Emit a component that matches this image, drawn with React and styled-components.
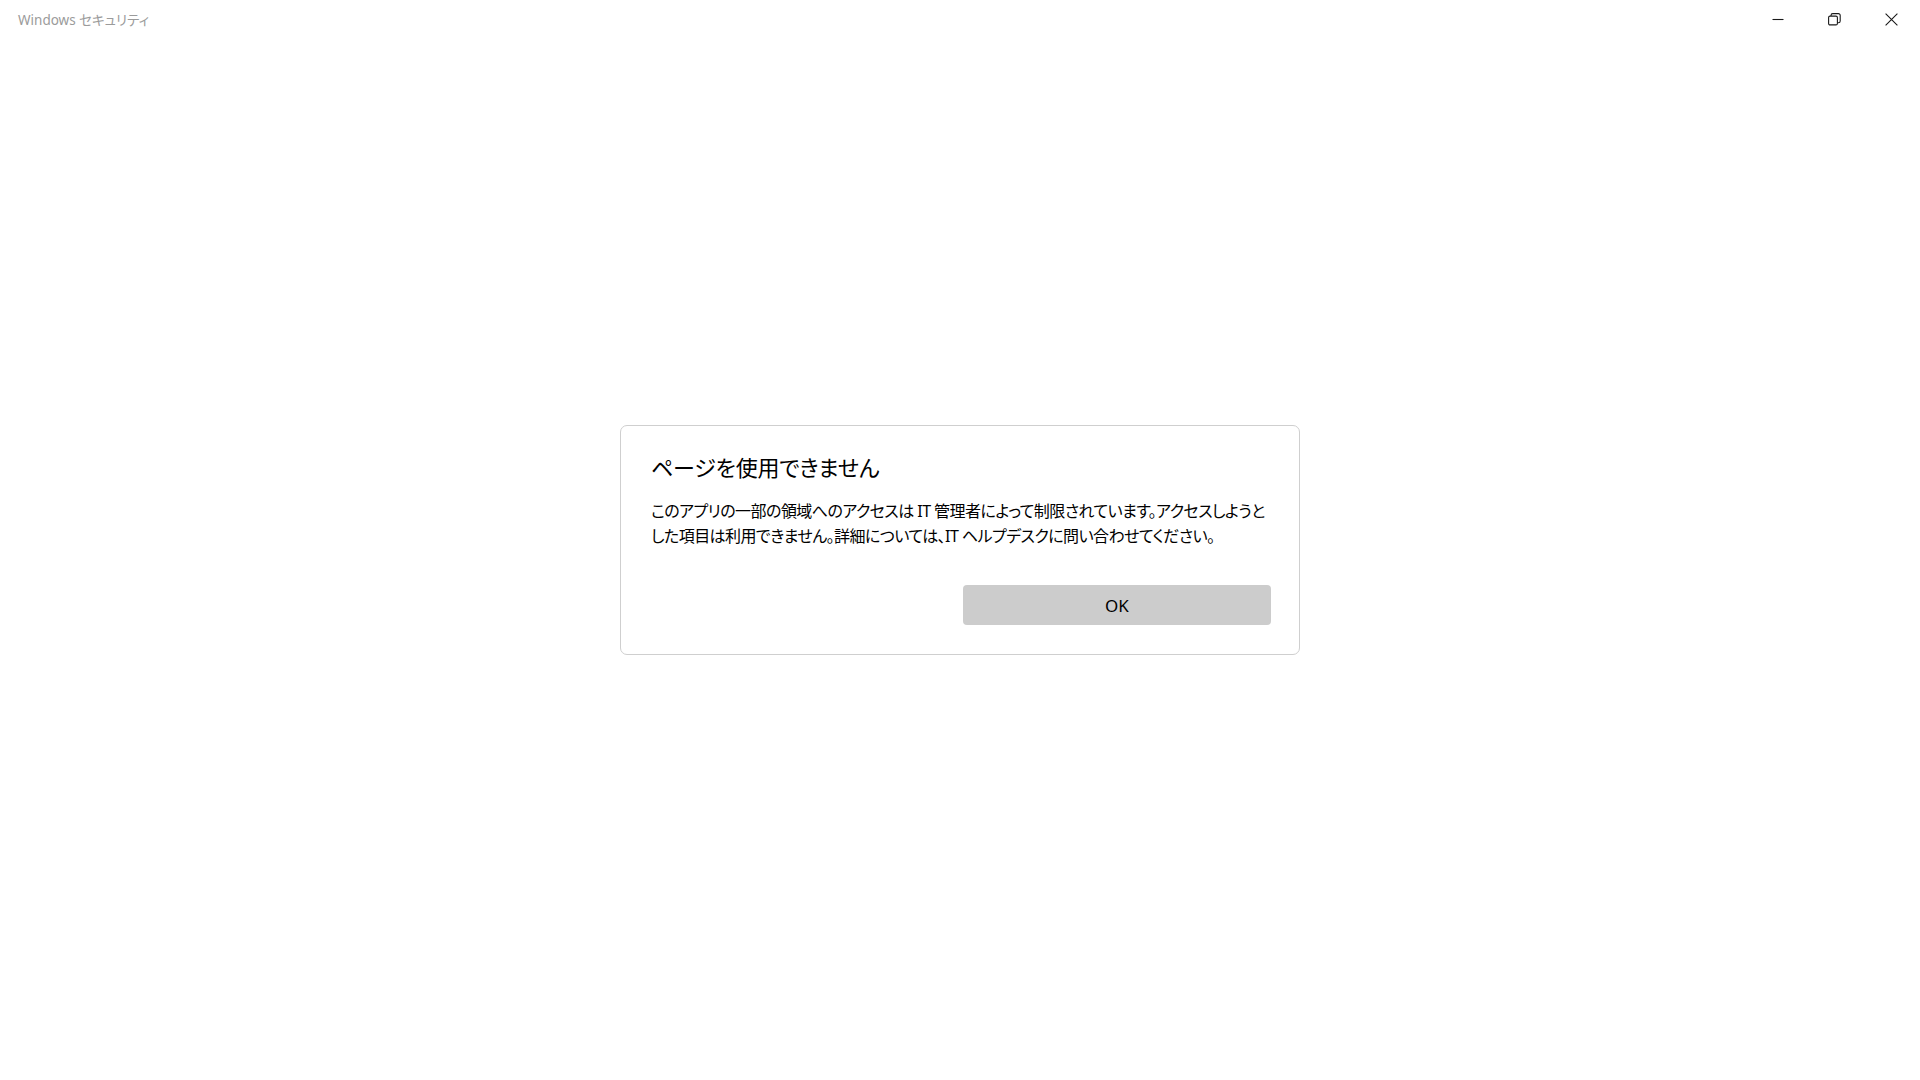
import React from "react";
import styled, { createGlobalStyle } from "styled-components";

const Global = createGlobalStyle`
  html, body { margin: 0; padding: 0; background: #ffffff; }
  body { font-family: "Noto Sans", "Noto Sans CJK JP", sans-serif; }
  * { box-sizing: border-box; }
`;

const Window = styled.div`
  display: grid;
  grid-template-areas: "stack";
  width: 100vw;
  height: 100vh;
  background: #ffffff;
  overflow: hidden;
`;

const TitleBar = styled.header`
  grid-area: stack;
  align-self: start;
  z-index: 1;
  height: 40px;
  display: flex;
  align-items: flex-start;
  justify-content: space-between;
`;

const AppTitle = styled.div`
  padding: 10px 0 0 18px;
  font-family: "Noto Sans", "Noto Sans CJK JP", sans-serif;
  font-size: 13.5px;
  line-height: 20px;
  color: #9b9b9b;
  font-feature-settings: "palt";
`;

const Controls = styled.div`
  display: flex;
`;

const ControlButton = styled.button`
  width: 57px;
  height: 40px;
  border: 0;
  padding: 0;
  background: transparent;
  display: flex;
  align-items: flex-start;
  justify-content: center;
  padding-top: 13px;
  color: #1a1a1a;
  cursor: default;
  &:hover { background: ${(p) => (p.$close ? "#e81123" : "#e5e5e5")}; }
`;

const Main = styled.main`
  grid-area: stack;
  display: flex;
  align-items: center;
  justify-content: center;
`;

const Dialog = styled.section`
  width: 680px;
  border: 1px solid #cfcfcf;
  border-radius: 7px;
  background: #ffffff;
  padding: 24px 28px 29px 30px;
  display: flex;
  flex-direction: column;
`;

const Title = styled.h2`
  margin: 0;
  font-family: "Noto Sans", "Noto Sans CJK JP", sans-serif;
  font-weight: 400;
  font-size: 22px;
  line-height: 34px;
  color: #000000;
  font-feature-settings: "palt";
  letter-spacing: -0.2px;
`;

const Body = styled.p`
  margin: 15px 0 0 0;
  font-family: "Noto Sans", "Noto Sans CJK JP", sans-serif;
  font-size: 16px;
  line-height: 24.5px;
  color: #000000;
  font-feature-settings: "palt";
  letter-spacing: -0.55px;
  white-space: nowrap;
`;

const Footer = styled.div`
  display: grid;
  grid-template-columns: 1fr 1fr;
  column-gap: 4px;
  margin-top: 37px;
`;

const OkButton = styled.button`
  grid-column: 2;
  height: 40px;
  border: 0;
  border-radius: 4px;
  background: #cccccc;
  font-family: "Noto Sans", "Noto Sans CJK JP", sans-serif;
  font-size: 17px;
  color: #000000;
  cursor: default;
`;

const MinimizeIcon = () => (
  <svg width="12" height="12" viewBox="0 0 12 12" fill="none">
    <path d="M0.5 6.5H11.5" stroke="currentColor" strokeWidth="1.1" />
  </svg>
);

const RestoreIcon = () => (
  <svg width="13" height="13" viewBox="0 0 13 13" fill="none">
    <rect x="0.6" y="3.1" width="8.8" height="8.8" rx="1.4" stroke="currentColor" strokeWidth="1.1" />
    <path
      d="M3 3.1V2.4A1.8 1.8 0 0 1 4.8 0.6H10.4A1.8 1.8 0 0 1 12.2 2.4V8A1.8 1.8 0 0 1 10.4 9.8H9.4"
      stroke="currentColor"
      strokeWidth="1.1"
    />
  </svg>
);

const CloseIcon = () => (
  <svg width="13" height="13" viewBox="0 0 13 13" fill="none">
    <path d="M0.6 0.6L12.4 12.4M12.4 0.6L0.6 12.4" stroke="currentColor" strokeWidth="1.1" />
  </svg>
);

export default function App() {
  return (
    <>
      <Global />
      <Window>
        <TitleBar>
          <AppTitle>Windows セキュリティ</AppTitle>
          <Controls>
            <ControlButton aria-label="最小化"><MinimizeIcon /></ControlButton>
            <ControlButton aria-label="元に戻す"><RestoreIcon /></ControlButton>
            <ControlButton aria-label="閉じる" $close><CloseIcon /></ControlButton>
          </Controls>
        </TitleBar>
        <Main>
          <Dialog role="dialog">
            <Title>ページを使用できません</Title>
            <Body>
              このアプリの一部の領域へのアクセスは IT 管理者によって制限されています。アクセスしようと
              <br />
              した項目は利用できません。詳細については、IT ヘルプデスクに問い合わせてください。
            </Body>
            <Footer>
              <OkButton>OK</OkButton>
            </Footer>
          </Dialog>
        </Main>
      </Window>
    </>
  );
}
